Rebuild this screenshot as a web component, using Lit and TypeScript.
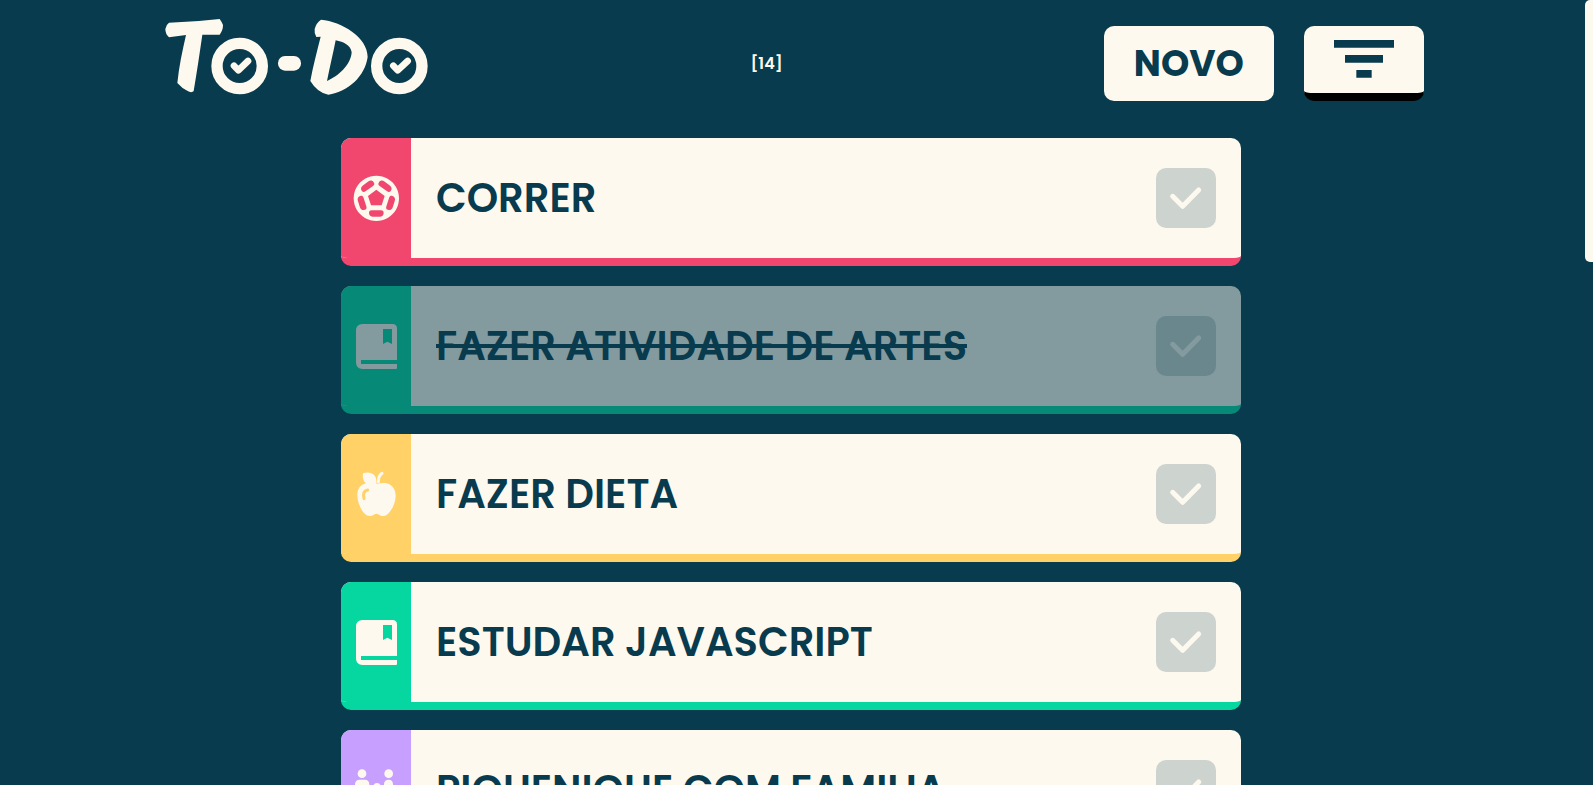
import { LitElement, html, css, svg } from "lit";
import { customElement, property, state } from "lit/decorators.js";
import { classMap } from "lit/directives/class-map.js";

type Category = "sport" | "study" | "food" | "family";

interface Task {
  title: string;
  category: Category;
  done: boolean;
}

const icons = {
  sport: svg`
    <path fill-rule="evenodd" d="M76 8a68 68 0 1 0 .01 0z
      M76 50 L101 69 L92 97 H60 L51 69z" />
    ${[0, 72, 144, 216, 288].map(
      (angle) => svg`<path class="cut" transform="rotate(${angle} 76 76)"
        d="M62 112 H90 C96 112 98 115 98 120 C98 127 93 131 86 131 H66 C59 131 54 127 54 120 C54 115 56 112 62 112z" />`
    )}`,
  study: svg`
    <path fill-rule="evenodd" d="M35 9 H124 Q138 9 138 23 V117 H30 V129 H138 V141 Q138 144 135 144 H35 Q15 144 15 124 V29 Q15 9 35 9z
      M96 24 V69 L109 62 L123 69 V24z" />`,
  food: svg`
    <path d="M77 45 C86 42 95 41 103 42 C123 45 134 60 134 80 C134 103 120 128 108 137 C100 143 90 142 84 137 Q76 132 69 137 C60 142 50 142 43 136 C30 125 19 100 19 78 C19 60 28 47 45 43 C36 36 34 24 36 13 C54 5 78 14 76 38z" />
    <path class="line" d="M82 38 C82 24 87 17 93 13" />
    <path class="cut-line" d="M39 89 C35 74 39 65 50 63" />`,
  family: svg`
    <circle cx="33" cy="26" r="13" />
    <circle cx="113" cy="26" r="13" />
    <path d="M26 44 H41 Q55 44 55 58 V97 H48 V140 H19 V97 H12 V58 Q12 44 26 44z" />
    <path d="M113 44 Q126 44 126 58 L138 101 H127 V140 H99 V101 H95 L99 58 Q99 44 113 44z" />
    <circle cx="78" cy="65" r="11" />
    <path d="M67 80 H89 V140 H67z" />`,
};

@customElement("task-card")
export class TaskCard extends LitElement {
  @property({ attribute: false }) task!: Task;

  static styles = css`
    :host {
      display: block;
    }
    .card {
      display: flex;
      align-items: stretch;
      overflow: hidden;
      border-bottom: 8px solid var(--accent);
      border-radius: 10px;
      background: var(--cream);
    }
    .sport { --accent: #f1476f; }
    .study { --accent: #06d6a0; }
    .food { --accent: #ffd166; }
    .family { --accent: #c79fff; }
    .done {
      opacity: 0.5;
    }
    .strip {
      flex: none;
      display: flex;
      align-items: center;
      justify-content: center;
      width: 70px;
      background: var(--accent);
    }
    .icon {
      width: 50px;
      height: 50px;
      fill: var(--cream);
    }
    .cut {
      fill: var(--accent);
    }
    .line,
    .cut-line {
      fill: none;
      stroke: var(--cream);
      stroke-width: 9;
      stroke-linecap: round;
    }
    .cut-line {
      stroke: var(--accent);
    }
    .body {
      flex: 1;
      display: flex;
      align-items: center;
      justify-content: space-between;
      padding: 30px 25px;
    }
    .title {
      font-size: 40px;
      font-weight: 600;
      line-height: 60px;
      text-transform: uppercase;
    }
    .done .title {
      text-decoration: line-through 4px;
    }
    .check {
      display: grid;
      flex: none;
      width: 60px;
      height: 60px;
    }
    .box,
    .tick {
      grid-area: 1 / 1;
      width: 60px;
      height: 60px;
      margin: 0;
    }
    .box {
      appearance: none;
      border-radius: 10px;
      background: var(--navy);
      opacity: 0.2;
      cursor: pointer;
    }
    .tick {
      z-index: 1;
      pointer-events: none;
      fill: none;
      stroke: var(--cream);
      stroke-width: 15;
      stroke-linecap: round;
      stroke-linejoin: round;
    }
  `;

  render() {
    const { title, category, done } = this.task;
    return html`
      <article class=${classMap({ card: true, done, [category]: true })}>
        <div class="strip">
          <svg class="icon" viewBox="0 0 150 150" aria-hidden="true">${icons[category]}</svg>
        </div>
        <div class="body">
          <label class="title" for="done">${title}</label>
          <span class="check">
            <input class="box" id="done" type="checkbox" .checked=${done} @change=${this.toggle} />
            <svg class="tick" viewBox="0 0 180 180" aria-hidden="true">
              <path d="M50 85 L80 115 L128 66" />
            </svg>
          </span>
        </div>
      </article>
    `;
  }

  private toggle() {
    this.dispatchEvent(new CustomEvent("toggle-task"));
  }
}

@customElement("app-root")
export class AppRoot extends LitElement {
  @state() private tasks: Task[] = [
    { title: "Correr", category: "sport", done: false },
    { title: "Fazer atividade de artes", category: "study", done: true },
    { title: "Fazer dieta", category: "food", done: false },
    { title: "Estudar JavaScript", category: "study", done: false },
    { title: "Piquenique com familia", category: "family", done: false },
  ];

  static styles = css`
    :host {
      --navy: #083b4e;
      --cream: #fef9ee;
      display: grid;
      grid-template-columns: 1fr 11px;
      height: 100vh;
      overflow: hidden;
      background: var(--navy);
      color: var(--navy);
      font-family: Poppins, Inter, sans-serif;
    }
    .page {
      overflow-y: auto;
      scrollbar-width: none;
    }
    .header {
      display: flex;
      align-items: center;
      justify-content: space-between;
      width: 80%;
      margin: 0 auto;
      padding: 19px 0;
    }
    .logo {
      display: block;
      width: 271px;
      height: 89px;
      fill: var(--cream);
    }
    .ring {
      fill: none;
      stroke: var(--cream);
      stroke-width: 34;
    }
    .mark {
      fill: none;
      stroke: var(--cream);
      stroke-width: 20;
      stroke-linecap: round;
      stroke-linejoin: round;
    }
    .count {
      color: var(--cream);
      font-size: 16px;
      font-weight: 600;
    }
    .actions {
      display: flex;
      gap: 30px;
    }
    .button {
      height: 75px;
      padding: 0 30px;
      border: 0;
      border-radius: 10px;
      background: var(--cream);
      color: var(--navy);
      font: 700 36px Poppins, Inter, sans-serif;
      cursor: pointer;
    }
    .filter {
      border-bottom: 8px solid #000;
    }
    .bars {
      display: block;
      width: 60px;
      height: 40px;
      fill: var(--navy);
    }
    .list {
      display: grid;
      gap: 20px;
      max-width: 900px;
      margin: 11px auto 0;
      padding: 0;
      list-style: none;
    }
    .track {
      display: flex;
      justify-content: flex-end;
    }
    .thumb {
      width: 8px;
      height: 33.4%;
      border-radius: 5px 0 0 5px;
      background: var(--cream);
    }
  `;

  render() {
    return html`
      <div class="page">
        <header class="header">
          <svg class="logo" viewBox="9 28 813 267" role="img" aria-label="To-Do">
            <path d="M42 39 Q120 37 194 28 Q200 36 204 46 Q204 62 194 75 L142 75 C134 130 126 185 116 244 C112 249 104 248 98 244 Q80 235 67 220 C72 170 82 125 93 76 L42 83 Q31 73 31 58 Q33 45 42 39z" />
            <circle class="ring" cx="254" cy="169" r="68" />
            <path class="mark" d="M237 168 L250 182 L279 154" />
            <rect x="369" y="139" width="69" height="44" rx="21" />
            <path fill-rule="evenodd" d="M498 30 C560 36 638 82 638 142 C630 200 580 246 520 255 Q488 250 466 214 C474 170 486 125 497 81 L484 82 Q477 71 479 58 Q484 39 498 30z
              M542 92 C534 132 525 170 516 214 C550 200 588 165 590 128 C587 106 566 97 542 92z" />
            <circle class="ring" cx="733" cy="169" r="68" />
            <path class="mark" d="M715 168 L728 182 L758 154" />
          </svg>
          <span class="count">[${14}]</span>
          <div class="actions">
            <button class="button">NOVO</button>
            <button class="button filter" aria-label="Filtrar">
              <svg class="bars" viewBox="0 0 180 120" aria-hidden="true">
                <path d="M0 0H180V23H0z M33 45H147V68H33z M67 90H113V113H67z" />
              </svg>
            </button>
          </div>
        </header>
        <ul class="list">
          ${this.tasks.map(
            (task, index) => html`<li>
              <task-card .task=${task} @toggle-task=${() => this.toggle(index)}></task-card>
            </li>`
          )}
        </ul>
      </div>
      <div class="track"><div class="thumb"></div></div>
    `;
  }

  private toggle(index: number) {
    this.tasks = this.tasks.map((task, i) => (i === index ? { ...task, done: !task.done } : task));
  }
}
